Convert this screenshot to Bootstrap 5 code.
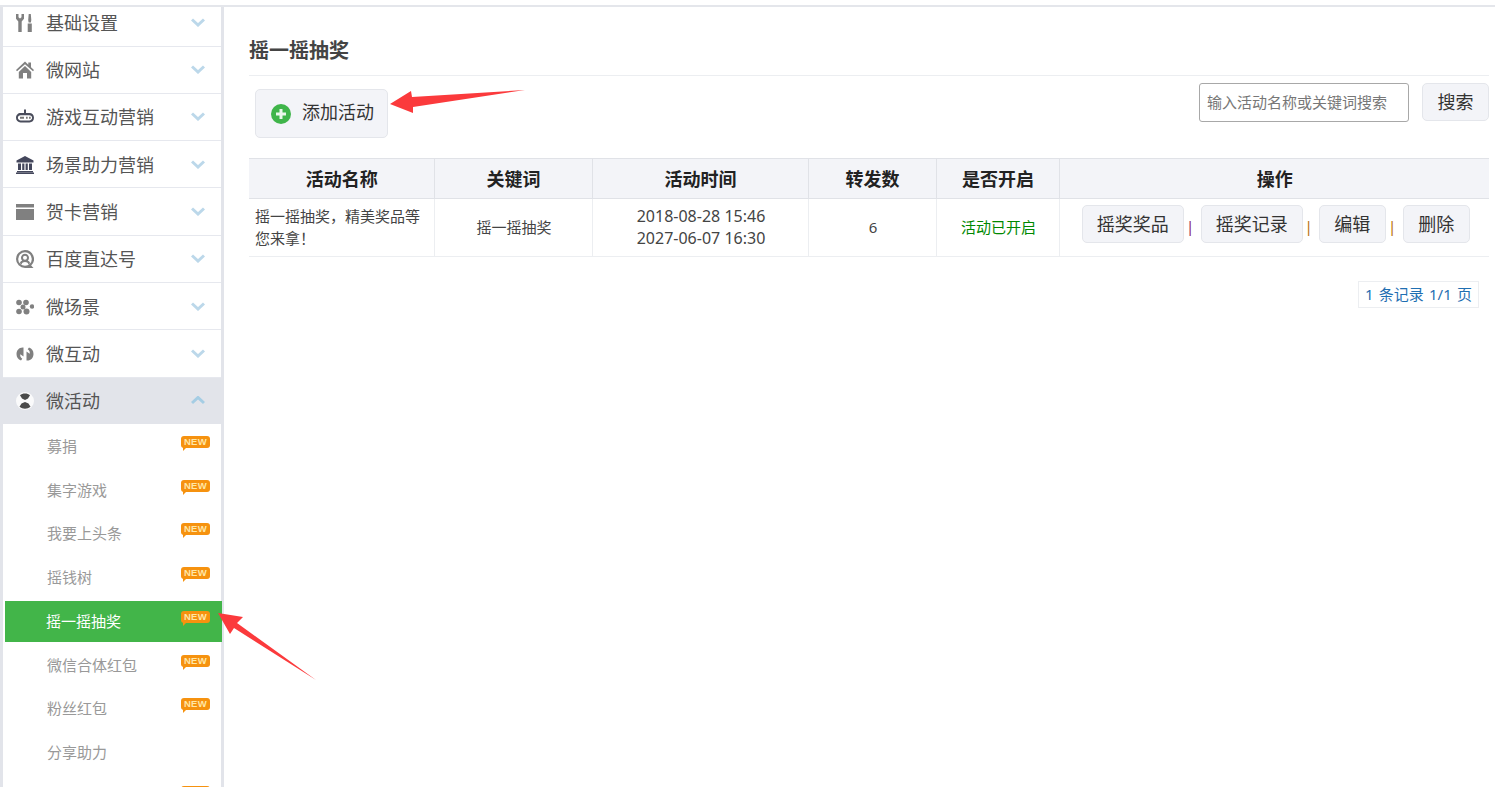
<!DOCTYPE html>
<html lang="zh-CN">
<head>
<meta charset="utf-8">
<title>摇一摇抽奖</title>
<link rel="stylesheet" href="https://cdn.jsdelivr.net/npm/bootstrap@5.3.0/dist/css/bootstrap.min.css">
<style>
html,body{height:787px;overflow:hidden;background:#fff}
body{font-family:"Noto Sans","Noto Sans CJK SC",sans-serif;color:#444;font-size:15px;position:relative}
.top-rule{height:7px;border-bottom:2px solid #e4e6eb}
.shell{height:780px;overflow:hidden}
.side-panel{width:224px;flex:none;background:#e2e4ea;padding:0 3px;overflow:hidden}
.side-inner{background:#fff;width:218px}
.menu-row{height:47.3px;border-bottom:1px solid #e6e8ee;padding:1px 16px 0 13px;font-size:18px;color:#555;gap:12px;line-height:1}
.menu-row.first-row{height:39.5px;padding-top:0;padding-bottom:7px}
.menu-row.open-row{background:#e2e4ea;border-bottom:0;height:46.4px}
.menu-row svg.ico{width:18px;height:18px;flex:none;fill:#808080}
.chev{width:14px;height:9px;flex:none;fill:none;stroke:#bcd8ea;stroke-width:3;margin-left:auto;margin-top:-1px}
.open-row .chev{stroke:#a5cde4}
.sub-row{height:43.75px;position:relative;color:#999;font-size:15px;line-height:1;padding-top:2px}
.sub-link{height:41px;padding:0 0 0 44px;margin-right:-1px;display:flex;align-items:center}
.sub-link.on{background:#42b549;color:#fff;margin-left:2px;padding-left:41px}
.new-tag{position:absolute;left:178px;top:12px;width:29px;height:12px;background:#f6920f;border-radius:3px;color:#ffe7a6;font:700 9.5px/12px "Liberation Sans",sans-serif;text-align:center;letter-spacing:.3px}
.new-tag::after{content:"";position:absolute;left:2px;top:11px;border:2px solid transparent;border-top-color:#f6920f;border-left-color:#f6920f}
.work-area{padding:0 6px 0 25px;min-width:0}
.page-head{font-size:20px;font-weight:700;color:#444;height:69px;line-height:1;padding-top:34px;border-bottom:1px solid #eceef1;margin:0}
.tool-row{height:82px}
.flat-btn{background:#f3f4f8;border:1px solid #e4e6eb;border-radius:5px;color:#333;font-size:18px;line-height:1;--bs-btn-hover-bg:#eceef3}
.add-btn{width:133px;height:49px;margin:13px 0 0 6px;display:flex;align-items:center;padding:0 0 3px 15px;gap:11px}
.plus-ico{width:20px;height:20px;flex:none;margin-top:3px}
.find-box{margin-top:7px;gap:13px}
.find-input{width:210px;height:39px;border:1px solid #a8a8a8;border-radius:3px;font-size:15px;padding:0 7px 2px;color:#555}
.find-input::placeholder{color:#777;opacity:1}
.find-btn{width:67px;height:38px;padding:0}
.data-grid{table-layout:fixed;width:1240px;border-collapse:collapse;margin:0;--bs-table-border-color:#e8eaee}
.data-grid th{background:#f3f4f8;height:40px;font-size:18px;line-height:1;color:#222;font-weight:700;text-align:center;vertical-align:middle;padding:0 0 0 1px;border:1px solid #e0e2e7;box-shadow:none}
.data-grid td{height:58px;font-size:15px;line-height:22px;color:#444;text-align:center;vertical-align:middle;padding:0 5px 2px 7px;border:1px solid #eceef1;border-width:0 1px 1px}
.data-grid th:first-child,.data-grid td:first-child{border-left:0}
.data-grid th:last-child,.data-grid td:last-child{border-right:0}
.data-grid td.name-cell{text-align:left;padding:0 6px 2px}
.data-grid td.live-cell{color:#080}
.data-grid td.time-cell{font-size:16px}
.data-grid td.op-cell{vertical-align:top;padding:6px 0 0 3px}
.col-a{width:185px}.col-b{width:158px}.col-c{width:216px}.col-d{width:128px}.col-e{width:123px}.col-f{width:430px}
.op-btn{height:38px;padding:0 14px;min-width:67px;white-space:nowrap}
.op-sep{width:17px;padding:3px 4px 0 0;text-align:center;color:#b86e08;font-size:15px}
.op-sep.tight{width:16px}
.op-sep.plum{color:#8c1f5e}
.pager-wrap{padding:24px 10px 0 0}
.pager-box{border:1px solid #eceef1;height:27px;width:121px;text-align:center;line-height:25px;font-size:15px;word-spacing:1.3px;color:#1f6fb2}
.arrow-layer{position:absolute;left:0;top:0;width:1495px;height:787px;pointer-events:none}
</style>
</head>
<body>
<div class="top-rule"></div>
<div class="d-flex shell">
  <aside class="side-panel">
    <div class="side-inner">
      <div class="menu-row first-row d-flex align-items-center">
        <svg class="ico" viewBox="0 0 18 18"><path d="M0 0h2.500v3.200L4 4.500l1.500-1.300V0H8v4.800L5.700 7.500V18H2.300V7.500L0 4.800z"/><path d="M12.700 0h2.100l.5 6-.4 2.500h-2.300l-.4-2.500zM11.700 9.500h4.100V18h-4.100z"/></svg>
        <span>基础设置</span>
        <svg class="chev" viewBox="0 0 14 9"><path d="M1 1.500l6 5.500 6-5.500"/></svg>
      </div>
      <div class="menu-row d-flex align-items-center">
        <svg class="ico" viewBox="0 0 18 18"><path d="M9 .5L0 9l1 1.300L9 3.300l8 7 1-1.300-3-2.800V1.500h-2.700v2.200z"/><path d="M2.800 11L9 5l6.200 6v6.500H11V12H7v5.500H2.800z"/></svg>
        <span>微网站</span>
        <svg class="chev" viewBox="0 0 14 9"><path d="M1 1.500l6 5.500 6-5.500"/></svg>
      </div>
      <div class="menu-row d-flex align-items-center">
        <svg class="ico" viewBox="0 0 18 18" style="fill:#4a4d5c"><path fill-rule="evenodd" d="M8 1.500h2V5h3.500C16 5 18 7 18 9.800s-2 4.700-4.500 4.700h-9C2 14.500 0 12.500 0 9.800S2 5 4.500 5H8zM4.700 7.200C3 7.200 1.900 8.300 1.900 9.800s1.100 2.600 2.800 2.600h8.600c1.700 0 2.800-1.100 2.800-2.600s-1.100-2.600-2.800-2.600z"/><path d="M4 8.800h4v2H4zM10 8.800h1.700v2H10zM13 8.800h1.700v2H13z" style="fill:#777"/></svg>
        <span>游戏互动营销</span>
        <svg class="chev" viewBox="0 0 14 9"><path d="M1 1.500l6 5.500 6-5.500"/></svg>
      </div>
      <div class="menu-row d-flex align-items-center">
        <svg class="ico" viewBox="0 0 18 18" style="fill:#44475c"><path d="M9 0L.5 4.500V6.500h17V4.500zM2 7.500h3v6.500H2zM6.200 7.500h2.200V14H6.200zM9.600 7.500h2.200V14H9.600zM13 7.500h3V14h-3zM1 15h16v1.200H1zM0 16.500h18V18H0z"/></svg>
        <span>场景助力营销</span>
        <svg class="chev" viewBox="0 0 14 9"><path d="M1 1.500l6 5.500 6-5.500"/></svg>
      </div>
      <div class="menu-row d-flex align-items-center">
        <svg class="ico" viewBox="0 0 18 18"><path d="M0 1h18v3.500H0zM0 6h18v11H0z"/></svg>
        <span>贺卡营销</span>
        <svg class="chev" viewBox="0 0 14 9"><path d="M1 1.500l6 5.500 6-5.500"/></svg>
      </div>
      <div class="menu-row d-flex align-items-center">
        <svg class="ico" viewBox="0 0 18 18"><path fill-rule="evenodd" d="M9 0a9 9 0 0 1 6.200 15.500L17.500 18H9A9 9 0 0 1 9 0zm0 2.200a6.800 6.800 0 1 0 0 13.600 6.800 6.800 0 0 0 0-13.600zM9 3.800a4 4 0 0 1 2.800 6.800c1.200.6 2 1.500 2.300 2.600l-1.700 1c-.4-1.300-1.800-2.200-3.400-2.200s-3 .9-3.400 2.200l-1.700-1c.3-1.100 1.100-2 2.300-2.600A4 4 0 0 1 9 3.800zm0 2a2 2 0 1 0 0 4 2 2 0 0 0 0-4z"/></svg>
        <span>百度直达号</span>
        <svg class="chev" viewBox="0 0 14 9"><path d="M1 1.500l6 5.500 6-5.500"/></svg>
      </div>
      <div class="menu-row d-flex align-items-center">
        <svg class="ico" viewBox="0 0 18 18"><circle cx="3" cy="4.500" r="2.800"/><circle cx="10" cy="4.500" r="2.800"/><circle cx="16" cy="8.500" r="2.200"/><circle cx="7" cy="9" r="2.500"/><circle cx="3" cy="13.500" r="2.800"/><circle cx="10.500" cy="13.500" r="3"/></svg>
        <span>微场景</span>
        <svg class="chev" viewBox="0 0 14 9"><path d="M1 1.500l6 5.500 6-5.500"/></svg>
      </div>
      <div class="menu-row d-flex align-items-center">
        <svg class="ico" viewBox="0 0 18 18"><path d="M7.500 2.500C3.500 2 .5 5 .5 9c0 3 1.500 5.500 4.500 6.500l1.300-1.800C4.500 12.500 4 11 4.300 9.300L7.500 11.500zM10.500 15.500c4 .5 7-2.500 7-6.500 0-3-1.500-5.500-4.500-6.500l-1.300 1.800c1.800 1.200 2.300 2.700 2 4.400L10.500 6.500z"/></svg>
        <span>微互动</span>
        <svg class="chev" viewBox="0 0 14 9"><path d="M1 1.500l6 5.500 6-5.500"/></svg>
      </div>
      <div class="menu-row open-row d-flex align-items-center">
        <svg class="ico" viewBox="0 0 18 18"><circle cx="9" cy="9" r="9" fill="#fafafb"/><path style="fill:#4a4a4a" d="M9 1.500c2 0 3.700.6 5 1.700L12 6.500 9 8 6 6.500 4 3.200C5.300 2.100 7 1.500 9 1.500zM9 10l3.500 1.500 2 3.300C13 16 11 16.800 9 16.800S5 16 3.500 14.800l2-3.300z"/></svg>
        <span>微活动</span>
        <svg class="chev" viewBox="0 0 14 9"><path d="M1 7l6-5.500L13 7"/></svg>
      </div>
      <div class="sub-row"><div class="sub-link">募捐</div><span class="new-tag">NEW</span></div>
      <div class="sub-row"><div class="sub-link">集字游戏</div><span class="new-tag">NEW</span></div>
      <div class="sub-row"><div class="sub-link">我要上头条</div><span class="new-tag">NEW</span></div>
      <div class="sub-row"><div class="sub-link">摇钱树</div><span class="new-tag">NEW</span></div>
      <div class="sub-row"><div class="sub-link on">摇一摇抽奖</div><span class="new-tag">NEW</span></div>
      <div class="sub-row"><div class="sub-link">微信合体红包</div><span class="new-tag">NEW</span></div>
      <div class="sub-row"><div class="sub-link">粉丝红包</div><span class="new-tag">NEW</span></div>
      <div class="sub-row"><div class="sub-link">分享助力</div></div>
      <div class="sub-row"><div class="sub-link"></div><span class="new-tag"></span></div>
    </div>
  </aside>
  <main class="work-area flex-grow-1">
    <h1 class="page-head">摇一摇抽奖</h1>
    <div class="tool-row d-flex justify-content-between align-items-start">
      <button type="button" class="btn flat-btn add-btn">
        <svg class="plus-ico" viewBox="0 0 20 20"><circle cx="10" cy="10" r="10" fill="#3fb54a"/><path d="M8.500 5h3v3.500H15v3h-3.500V15h-3v-3.500H5v-3h3.500z" fill="#eaf7eb"/></svg>
        <span>添加活动</span>
      </button>
      <form class="find-box d-flex">
        <input class="find-input" type="text" placeholder="输入活动名称或关键词搜索">
        <button type="button" class="btn flat-btn find-btn">搜索</button>
      </form>
    </div>
    <table class="table data-grid">
      <colgroup><col class="col-a"><col class="col-b"><col class="col-c"><col class="col-d"><col class="col-e"><col class="col-f"></colgroup>
      <thead>
        <tr><th>活动名称</th><th>关键词</th><th>活动时间</th><th>转发数</th><th>是否开启</th><th>操作</th></tr>
      </thead>
      <tbody>
        <tr>
          <td class="name-cell">摇一摇抽奖，精美奖品等您来拿！</td>
          <td>摇一摇抽奖</td>
          <td class="time-cell">2018-08-28 15:46<br>2027-06-07 16:30</td>
          <td>6</td>
          <td class="live-cell">活动已开启</td>
          <td class="op-cell">
            <div class="d-flex align-items-center justify-content-center">
              <button type="button" class="btn flat-btn op-btn">摇奖奖品</button><span class="op-sep plum">|</span>
              <button type="button" class="btn flat-btn op-btn">摇奖记录</button><span class="op-sep tight">|</span>
              <button type="button" class="btn flat-btn op-btn">编辑</button><span class="op-sep">|</span>
              <button type="button" class="btn flat-btn op-btn">删除</button>
            </div>
          </td>
        </tr>
      </tbody>
    </table>
    <div class="pager-wrap d-flex justify-content-end"><div class="pager-box">1 条记录 1/1 页</div></div>
  </main>
</div>
<svg class="arrow-layer" viewBox="0 0 1495 787">
  <polygon fill="#fb3a3c" points="390,104 411,91 412,97 525,90 413,107 413,113"/>
  <polygon fill="#fb3a3c" points="218,613 243,617 237,623 316,680 234,628 230,634"/>
</svg>
<script src="https://cdn.jsdelivr.net/npm/bootstrap@5.3.0/dist/js/bootstrap.bundle.min.js"></script>
</body>
</html>
